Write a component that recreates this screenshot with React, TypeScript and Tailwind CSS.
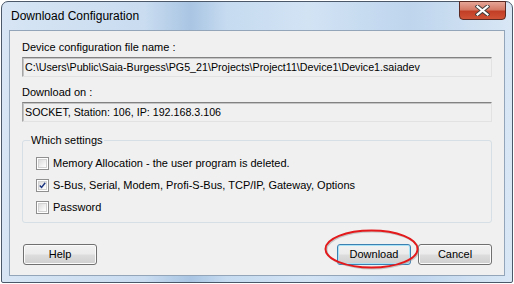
import React from 'react';

const font = { fontFamily: '"Liberation Sans", Arial, sans-serif' };

function ReadOnlyBox({ value }: { value: string }) {
  return (
    <div className="h-[20px] flex items-center pl-[2px] bg-[#f0f0f0] border border-t-[#828282] border-l-[#a5a5a5] border-r-[#e2e2e2] border-b-[#e2e2e2] shadow-[inset_1px_1px_0_#c4c4c4] text-[10.7px] text-black whitespace-nowrap overflow-hidden">
      {value}
    </div>
  );
}

function CheckRow({ label, checked }: { label: string; checked?: boolean }) {
  return (
    <div className="h-[22px] flex items-center">
      <div className="w-[13px] h-[13px] border border-[#8f8f8f] bg-white p-[1px] ml-[13px]">
        <div className="w-full h-full border border-[#d2d2d2] bg-[linear-gradient(135deg,#dcdcdc,#ffffff)] flex items-center justify-center">
          {checked && (
            <svg width="9" height="9" viewBox="0 0 9 9">
              <path d="M1 4.5 L3.3 7 L8 1" fill="none" stroke="#1c3581" strokeWidth="1.8" />
            </svg>
          )}
        </div>
      </div>
      <span className="ml-[4px] text-[11px] text-black">{label}</span>
    </div>
  );
}

function WinButton({ label, isDefault }: { label: string; isDefault?: boolean }) {
  return (
    <button
      className={`w-[74px] h-[21px] rounded-[3px] border text-[11px] text-black bg-[linear-gradient(180deg,#f2f2f2_0%,#ebebeb_48%,#dddddd_52%,#cfcfcf_100%)] ${
        isDefault
          ? 'border-[#3c7fb1] shadow-[inset_0_0_0_1px_#a9e3f8]'
          : 'border-[#707070] shadow-[inset_0_0_0_1px_#fbfbfb]'
      }`}
      style={font}
    >
      {label}
    </button>
  );
}

export default function App() {
  return (
    <div className="w-[514px] h-[284px] bg-white pt-[1px] pl-[1px]" style={font}>
      <div className="w-[512px] h-[282px] rounded-t-[7px] rounded-b-[2px] border border-[#4a5869] bg-[linear-gradient(90deg,#d7e5f4_0%,#c9dcf0_28%,#a9c5e3_37%,#c6dbf0_44%,#d2e3f4_60%,#bed5ed_80%,#d9e7f5_100%)] flex flex-col">
        {/* Title bar */}
        <div className="h-[28px] flex justify-between">
          <div className="pl-[9px] flex items-center text-[12px] text-black">Download Configuration</div>
          <div className="-mt-[1px] mr-[6px] w-[47px] h-[19px] rounded-b-[4px] border border-[#5b2a22] bg-[linear-gradient(180deg,#e6a596_0%,#d47a66_45%,#c23f26_55%,#cf5236_100%)] flex items-center justify-center">
            <svg width="15" height="11" viewBox="0 0 15 11">
              <path d="M2.5 1.5 L12.5 9.5 M12.5 1.5 L2.5 9.5" stroke="#3b3b3b" strokeWidth="4" strokeLinecap="square" />
              <path d="M2.5 1.5 L12.5 9.5 M12.5 1.5 L2.5 9.5" stroke="#ffffff" strokeWidth="2.2" strokeLinecap="square" />
            </svg>
          </div>
        </div>

        {/* Client area */}
        <div className="ml-[7px] mr-[7px] h-[246px] border border-[#93a5b9] bg-[#f0f0f0] px-[12px] pt-[10px] flex flex-col">
          <div className="h-[13px] leading-[13px] text-[11px] text-black">Device configuration file name :</div>
          <div className="mt-[3px]">
            <ReadOnlyBox value="C:\Users\Public\Saia-Burgess\PG5_21\Projects\Project11\Device1\Device1.saiadev" />
          </div>
          <div className="mt-[9px] h-[13px] leading-[13px] text-[11px] text-black">Download on :</div>
          <div className="mt-[3px]">
            <ReadOnlyBox value="SOCKET, Station: 106, IP: 192.168.3.106" />
          </div>

          <fieldset className="mt-[12px] border border-[#d5dfe5] rounded-[3px] pt-[5px] pb-[4px]">
            <legend className="ml-[7px] px-[1px] h-[13px] leading-[13px] text-[11px] text-black">Which settings</legend>
            <CheckRow label="Memory Allocation - the user program is deleted." />
            <CheckRow label="S-Bus, Serial, Modem, Profi-S-Bus, TCP/IP, Gateway, Options" checked />
            <CheckRow label="Password" />
          </fieldset>

          <div className="mt-[18px] flex items-center">
            <div className="ml-[1px]">
              <WinButton label="Help" />
            </div>
            <div className="flex-1" />
            <div className="relative">
              <WinButton label="Download" isDefault />
              <svg className="absolute -left-[13px] -top-[12px] pointer-events-none" width="97" height="42" viewBox="0 0 97 42">
                <ellipse cx="48.5" cy="21" rx="46" ry="18.5" fill="none" stroke="#9a9a9a" strokeOpacity="0.5" strokeWidth="2" />
                <ellipse cx="47.5" cy="20" rx="46" ry="18.5" fill="none" stroke="#e3191b" strokeWidth="2" />
              </svg>
            </div>
            <div className="ml-[7px]">
              <WinButton label="Cancel" />
            </div>
          </div>
        </div>
      </div>
    </div>
  );
}
